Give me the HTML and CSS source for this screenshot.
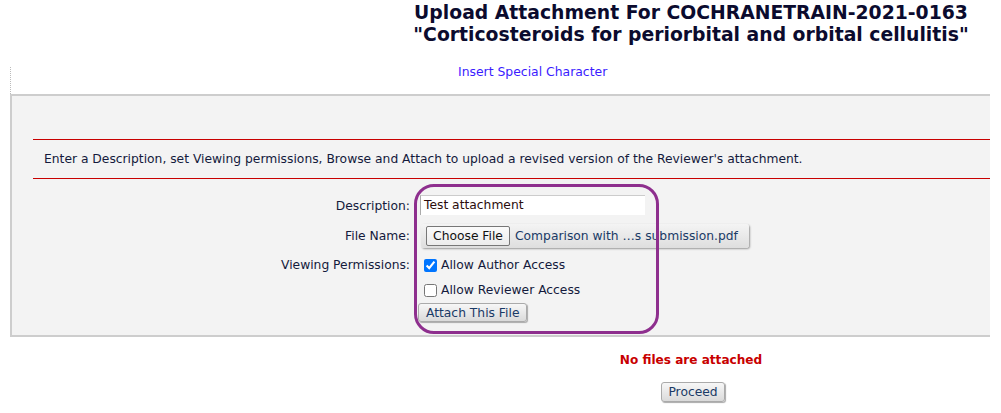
FILE: index.html
```html
<!DOCTYPE html>
<html>
<head>
<meta charset="utf-8">
<link rel="stylesheet" href="styles.css">
</head>
<body>
<div class="title">Upload Attachment For COCHRANETRAIN-2021-0163<br>"Corticosteroids for periorbital and orbital cellulitis"</div>
<div class="linkrow"><a class="speclink" href="#">Insert Special Character</a></div>
<div class="panel">
  <div class="instr">Enter a Description, set Viewing permissions, Browse and Attach to upload a revised version of the Reviewer's attachment.</div>
  <div class="form">
    <div class="label l-desc">Description:</div>
    <div class="ctrl c-desc"><span class="textbox">Test attachment</span></div>
    <div class="label l-file">File Name:</div>
    <div class="ctrl c-file"><span class="filebox"><span class="choose">Choose File</span><span class="fname">Comparison with …s submission.pdf</span></span></div>
    <div class="label l-perm">Viewing Permissions:</div>
    <div class="ctrl perms">
      <label class="chk"><input type="checkbox" checked> Allow Author Access</label>
      <label class="chk chk2"><input type="checkbox"> Allow Reviewer Access</label>
      <span class="btn attach">Attach This File</span>
    </div>
  </div>
</div>
<div class="status">No files are attached</div>
<div class="proceedrow"><span class="btn proceed">Proceed</span></div>
<div class="annot"></div>
</body>
</html>
```
FILE: styles.css
```css
html, body { margin: 0; padding: 0; overflow: hidden; background: #fff; }
body { font-family: "DejaVu Sans", sans-serif; font-size: 12.3px; color: #141a3c; position: relative; height: 413px; }
.title { margin-left: 400px; width: 582px; text-align: center; font-weight: bold; font-size: 18.8px; line-height: 22px; color: #0b0b2e; padding-top: 2px; }
.linkrow { margin-top: 21px; margin-left: 10px; height: 27px; border-left: 1px dotted #bbb; padding-left: 447px; box-sizing: border-box; }
.speclink { color: #3a1cff; text-decoration: none; font-size: 12.4px; line-height: 8px; display: inline-block; position: relative; top: -2px; }
.panel { margin-left: 10px; width: 980px; height: 243px; box-sizing: border-box; background: #f3f3f3; border-top: 2px solid #cdcdcd; border-left: 2px solid #cdcdcd; border-bottom: 2px solid #cdcdcd; padding-top: 43px; }
.instr { margin-left: 21px; border-top: 1px solid #c80000; border-bottom: 1px solid #c80000; height: 38px; line-height: 38px; padding-left: 11px; }
.form { display: grid; grid-template-columns: 398px 420px; column-gap: 8px; }
.label { text-align: right; }
.l-desc { padding-top: 20px; }
.l-file { padding-top: 14px; }
.l-perm { padding-top: 10px; }
.c-desc { padding-top: 16px; }
.c-file { padding-top: 9px; }
.textbox { display: block; width: 225px; height: 20px; box-sizing: border-box; background: #fff; border-left: 1px solid #aaa; border-top: 1px solid #ccc; line-height: 19px; padding-left: 3px; color: #2b0d0d; margin-left: 2px; }
.filebox { display: inline-flex; align-items: center; height: 24px; width: 328px; box-sizing: border-box; margin-left: 3px; border-radius: 3px; background: linear-gradient(#f4f4f4, #dedede); box-shadow: 1px 1px 2px #999; padding-left: 5px; }
.choose { display: inline-block; height: 20px; line-height: 18px; width: 84px; text-align: center; box-sizing: border-box; border: 1px solid #777; border-radius: 2px; background: linear-gradient(#fbfbfb, #ececec); color: #111; }
.fname { margin-left: 5px; color: #1a3a66; white-space: nowrap; }
.perms { padding-top: 7px; }
.chk { display: flex; align-items: center; height: 20px; color: #141a3c; margin-left: 3px; }
.chk input { margin: 0 4px 0 3px; width: 13px; height: 13px; accent-color: #0075ff; }
.chk2 { margin-top: 5px; }
.btn { display: inline-block; height: 19px; line-height: 18px; box-sizing: border-box; padding: 0 7px; border: 1px solid #aaa; border-radius: 3px; background: linear-gradient(#f7f7f7, #dadada); color: #1a3a66; box-shadow: 1px 1px 1px #aaa; }
.attach { margin-top: 3px; }
.status { margin-left: 400px; width: 582px; text-align: center; color: #c80000; font-weight: bold; font-size: 12.1px; margin-top: 16px; }
.proceedrow { margin-left: 400px; width: 586px; text-align: center; margin-top: 15px; }
.proceed { height: 20px; line-height: 19px; padding: 0 6px; }
.annot { position: absolute; left: 414px; top: 184px; width: 245px; height: 150px; box-sizing: border-box; border: 3px solid #8e2f8e; border-radius: 20px; }
```
